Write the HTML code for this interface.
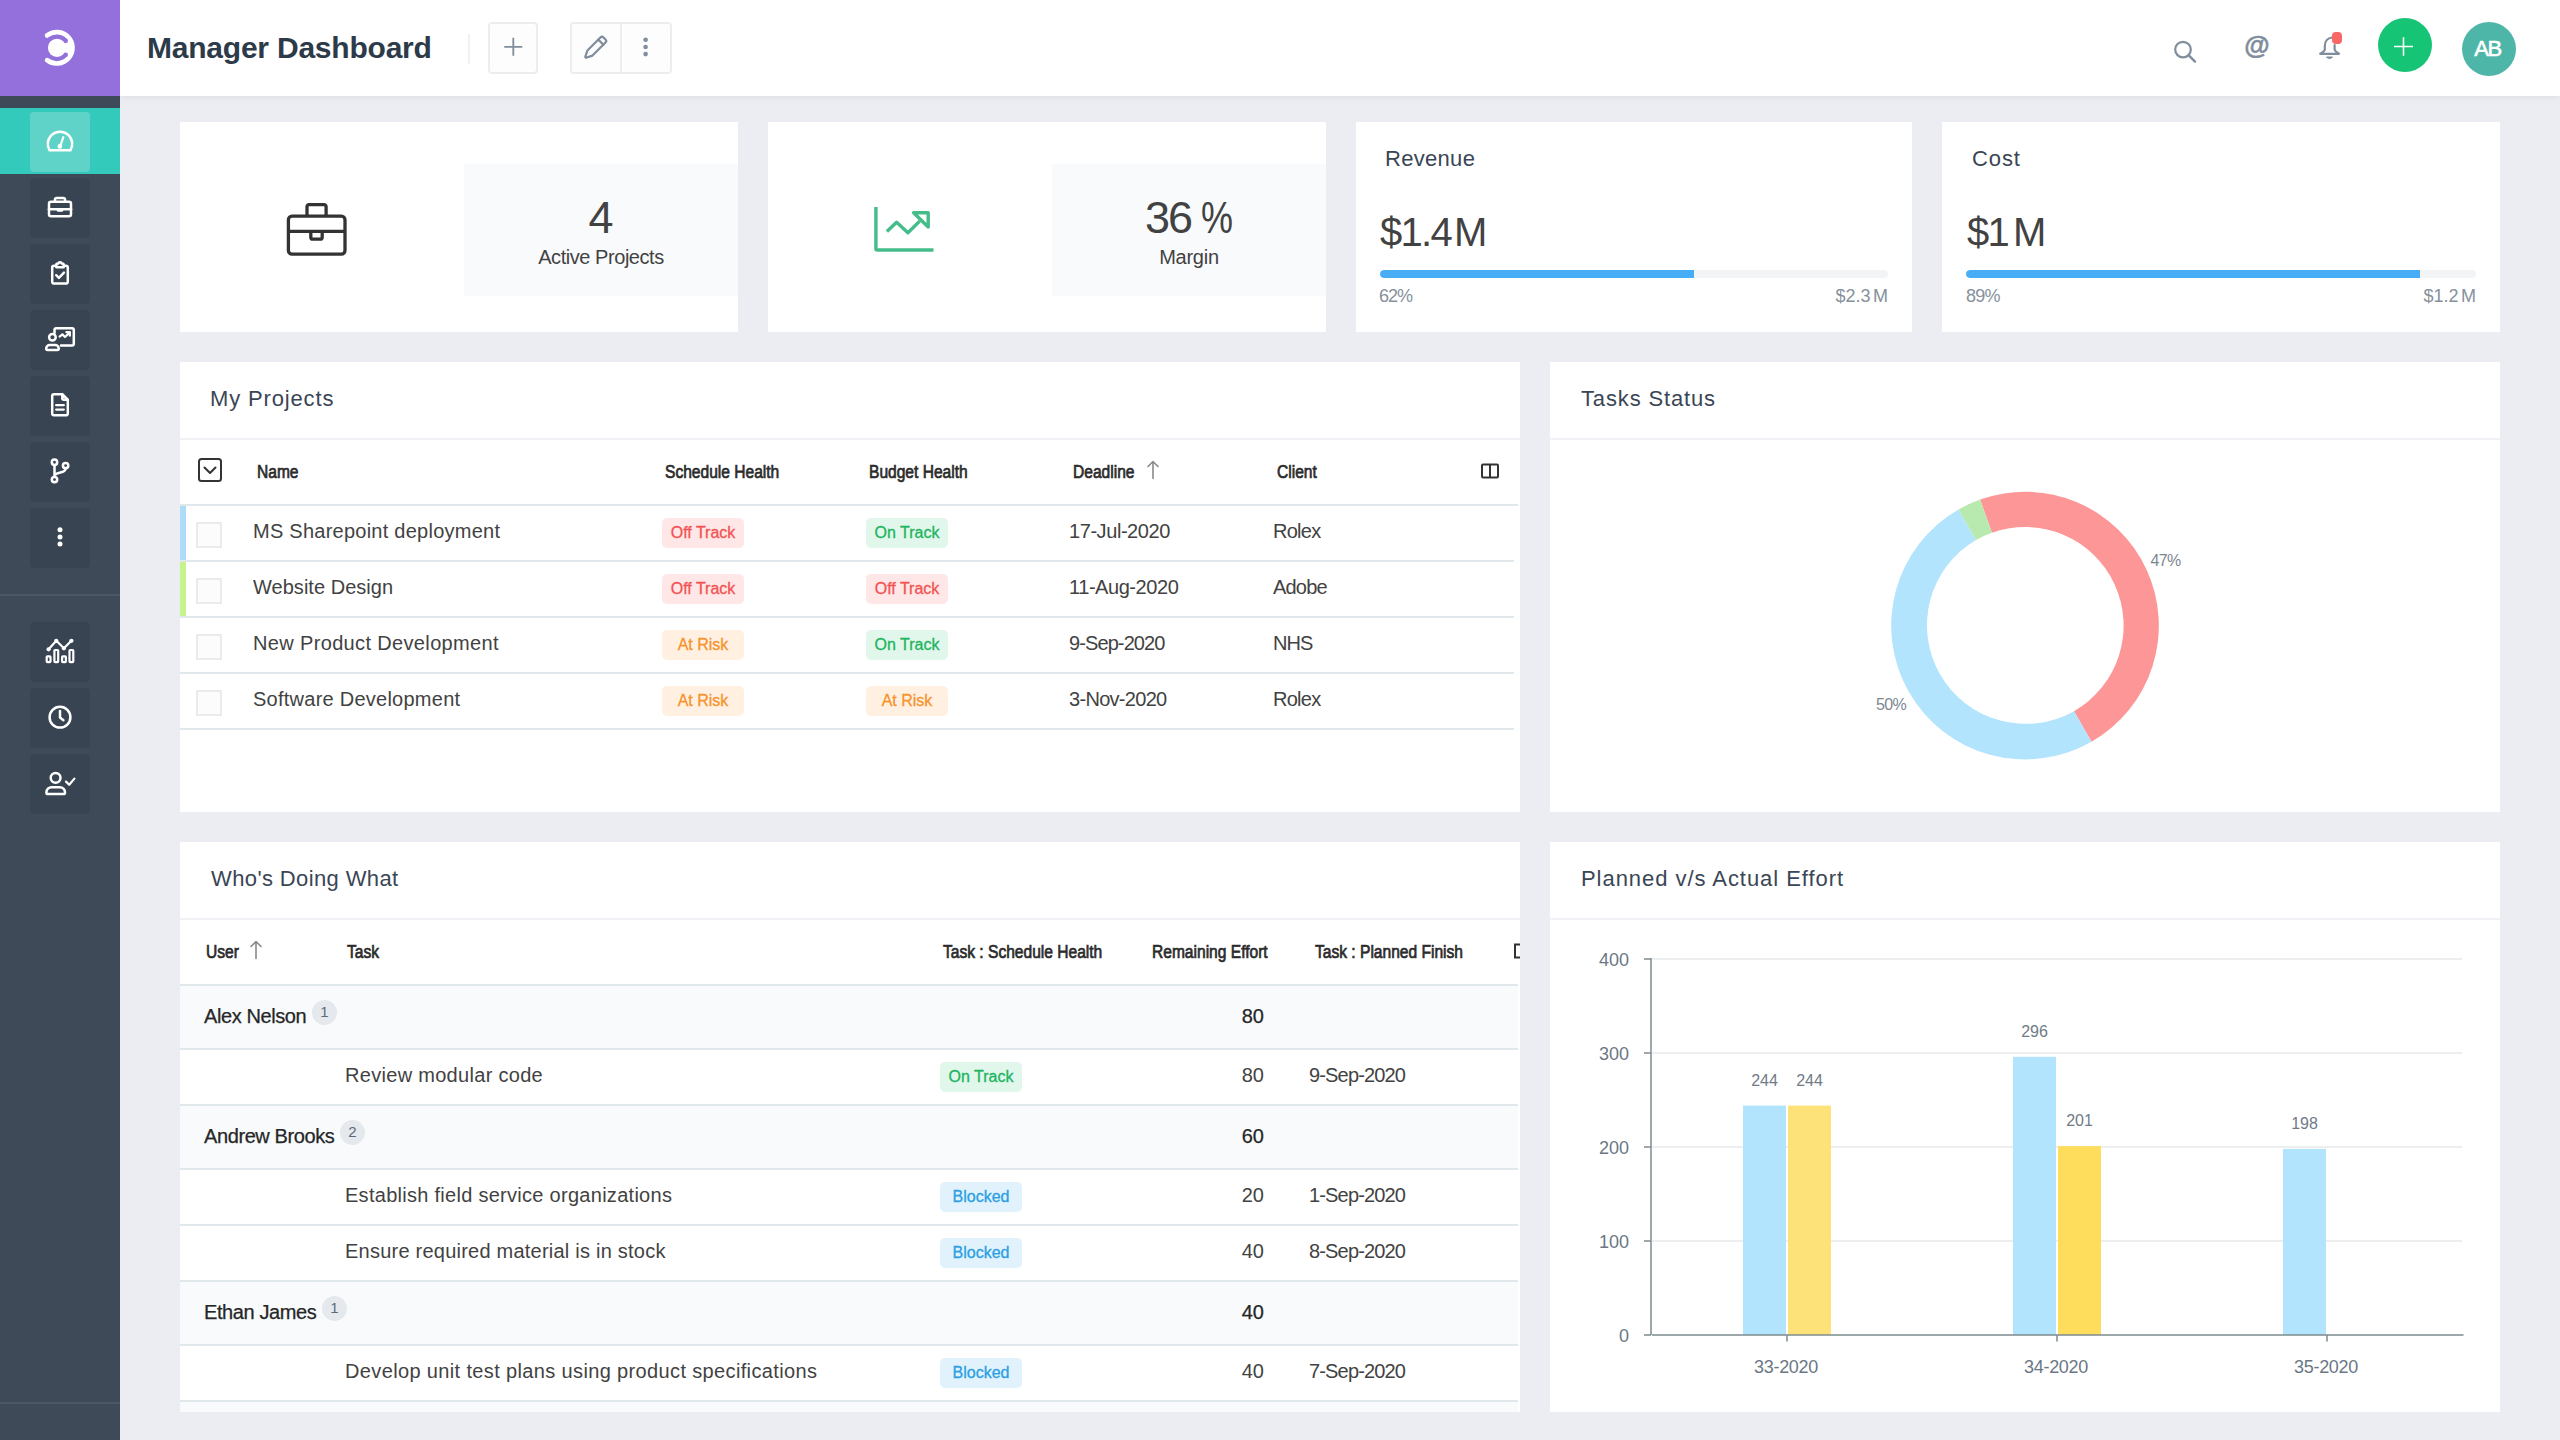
<!DOCTYPE html><html lang="en"><head><meta charset="utf-8"><title>Manager Dashboard</title><style>
*{box-sizing:border-box;margin:0;padding:0}
html,body{width:2560px;height:1440px;overflow:hidden}
body{position:relative;background:#ebedf2;font-family:"Liberation Sans",sans-serif;color:#333;}
.abs{position:absolute}
#side{position:absolute;z-index:5;left:0;top:0;width:120px;height:1440px;background:#3f4a59}
#logo{position:absolute;left:0;top:0;width:120px;height:96px;background:#9370dc}
#act{position:absolute;left:0;top:108px;width:120px;height:66px;background:#33c9bb}
.nb{position:absolute;left:30px;width:60px;height:60px;border-radius:4px;background:#394453}
.nb.on{background:#60d3c8}
.sdiv{position:absolute;left:0;width:120px;height:2px;background:#4b5766}
#hdr{position:absolute;left:120px;top:0;width:2440px;height:96px;background:#fff;box-shadow:0 1px 7px rgba(60,70,90,.09)}
#ttl{position:absolute;left:147px;top:26px;height:44px;line-height:44px;font-size:30px;font-weight:bold;color:#2d3a49;white-space:nowrap;letter-spacing:-.22px}
.hb{position:absolute;top:22px;height:52px;border:2px solid #ebedef;border-radius:4px;background:#fdfdfd}
.card{position:absolute;top:122px;height:210px;background:#fff}
.cin{position:absolute;top:42px;right:0;width:274px;height:132px;background:#f9fafc;text-align:center}
.big{position:absolute;left:0;width:100%;top:28px;font-size:45px;line-height:52px;color:#424242;white-space:nowrap}
.big b{font-weight:normal;letter-spacing:-2px}
.pc{display:inline-block;font-style:normal;transform:scaleX(.8);transform-origin:0 50%;margin-left:10px;margin-right:-8px}
.sub{position:absolute;left:0;width:100%;top:80px;font-size:20px;line-height:26px;color:#424242;white-space:nowrap;letter-spacing:-.45px}
.ct{position:absolute;top:22px;font-size:22px;line-height:28px;color:#3a4655;letter-spacing:.9px;white-space:nowrap}
.cv{position:absolute;top:86px;font-size:40px;line-height:48px;color:#424242;white-space:nowrap;letter-spacing:-1.7px}
.pb{position:absolute;top:148px;height:8px;border-radius:4px;background:#f3f4f5;overflow:hidden}
.pb i{position:absolute;left:0;top:0;height:8px;background:#47adf5;border-radius:4px 0 0 4px}
.pl{position:absolute;top:163px;font-size:18px;line-height:22px;color:#86919c;white-space:nowrap}
.panel{position:absolute;background:#fff;overflow:hidden}
.pt{position:absolute;left:30px;top:22px;font-size:22px;line-height:30px;color:#3a4655;letter-spacing:.85px;white-space:nowrap}
.tsep{position:absolute;left:0;right:0;top:76px;height:2px;background:#f0f2f5}
.hl{position:absolute;height:2px;background:#e1e8eb}
.th{position:absolute;font-size:18px;line-height:24px;font-weight:normal;-webkit-text-stroke:.7px;color:#2b2b2b;white-space:nowrap;transform-origin:0 50%;transform:scaleX(.865)}
.td{position:absolute;font-size:20px;line-height:26px;color:#424242;white-space:nowrap}
.tg{position:absolute;font-size:20px;line-height:26px;color:#262626;white-space:nowrap;-webkit-text-stroke:.25px}
.bd{position:absolute;width:82px;height:30px;border-radius:5px;font-size:16px;line-height:30px;text-align:center;white-space:nowrap;-webkit-text-stroke:.3px}
.on_{background:#e2f7ec;color:#1db45e}
.off{background:#ffe7e7;color:#f25252}
.risk{background:#fff0e2;color:#f6932b}
.blk{background:#e1f2fc;color:#2b9fe3}
.cb{position:absolute;left:16px;width:26px;height:26px;border:2px solid #ebebeb;background:#fcfcfc}
.grow{position:absolute;left:0;width:1338px;background:#f8fafc}
.cnt{position:absolute;width:25px;height:25px;border-radius:13px;background:#e5e8ec;color:#5b6b7b;font-size:15px;line-height:24px;text-align:center}
svg{position:absolute;overflow:visible}
svg text{font-family:"Liberation Sans",sans-serif}
</style></head><body>
<div id="side">
<div id="logo"><svg width="120" height="96" viewBox="0 0 120 96" style="left:0;top:0">
<path d="M47.13 35.43A15.7 15.7 0 1 1 47.13 60.17" fill="none" stroke="#fff" stroke-width="4.7" stroke-linecap="round"/>
<circle cx="57" cy="47.8" r="9.1" fill="#fff"/>
<path d="M65.70 40.84A11.3 11.3 0 0 1 65.70 54.76" fill="none" stroke="#fff" stroke-width="6.6"/>
<circle cx="65.70" cy="40.84" r="2.3" fill="#9370dc"/><circle cx="65.70" cy="54.76" r="2.3" fill="#9370dc"/>
</svg></div>
<div id="act"></div>
<div class="nb on" style="top:112px"></div>
<div class="nb" style="top:178px"></div>
<div class="nb" style="top:244px"></div>
<div class="nb" style="top:310px"></div>
<div class="nb" style="top:376px"></div>
<div class="nb" style="top:442px"></div>
<div class="nb" style="top:508px"></div>
<div class="nb" style="top:622px"></div>
<div class="nb" style="top:688px"></div>
<div class="nb" style="top:754px"></div>
<div class="sdiv" style="top:594px"></div><div class="sdiv" style="top:1402px"></div>
<svg width="120" height="1440" viewBox="0 0 120 1440" style="left:0;top:0" fill="none" stroke="#fff" stroke-width="2.5" stroke-linecap="round" stroke-linejoin="round">
<path d="M70.5 150.25A12.25 12.25 0 1 0 49.5 150.25Z"/>
<path d="M63.3 137.2L60.4 145.6" stroke-width="2.2"/><circle cx="59.8" cy="146.4" r="2.3" fill="#fff" stroke="none"/>
<rect x="49" y="201.7" width="22" height="14.6" rx="2"/><path d="M55 201.5V199.600A1.600 1.600 0 0 1 56.600 198H63.400A1.600 1.600 0 0 1 65 199.600V201.500"/><path d="M49 209.2H71"/><path d="M57.8 209.6V210.6H62.2V209.6" stroke-width="2.2"/>
<path d="M56 265.7H54A1.8 1.8 0 0 0 52.2 267.5V281.8A1.8 1.8 0 0 0 54 283.6H66A1.8 1.8 0 0 0 67.8 281.8V267.5A1.8 1.8 0 0 0 66 265.7H64"/><path d="M56.3 267.2V264.8A1.3 1.3 0 0 1 57.6 263.5H58.2A1.9 1.9 0 0 1 61.8 263.5H62.4A1.3 1.3 0 0 1 63.7 264.8V267.2Z"/><path d="M56.2 275.2L58.9 277.9L64 272.6" stroke-width="2.4"/>
<path d="M54.5 333V330A1.8 1.8 0 0 1 56.3 328.2H72A1.8 1.8 0 0 1 73.8 330V343.8A1.8 1.8 0 0 1 72 345.6H61"/><circle cx="52.4" cy="337.3" r="3.3"/><path d="M47.6 350H57.4A1.4 1.4 0 0 0 58.8 348.6A3.6 3.6 0 0 0 55.2 345H49.8A3.6 3.6 0 0 0 46.2 348.6A1.4 1.4 0 0 0 47.6 350Z"/><path d="M59.6 336.6L62.4 334.4L65 337L69.6 332.6M66.4 332.2H69.9V335.7" stroke-width="2.2"/>
<path d="M62.3 394.2H54A1.8 1.8 0 0 0 52.2 396V413.5A1.8 1.8 0 0 0 54 415.3H66A1.8 1.8 0 0 0 67.8 413.5V399.7L62.3 394.2V398.2A1.5 1.5 0 0 0 63.8 399.7H67.8"/><path d="M56.2 405.2H63.8M56.2 409.6H63.8" stroke-width="2.3"/>
<circle cx="54.5" cy="462.3" r="2.7"/><circle cx="54.5" cy="479.6" r="2.7"/><circle cx="65.6" cy="465.6" r="2.7"/><path d="M54.5 465.2V476.7M65.6 468.5C65.6 473.5 58 471.5 54.8 474.8"/>
<g fill="#fff" stroke="none"><circle cx="60" cy="529.8" r="2.5"/><circle cx="60" cy="537" r="2.5"/><circle cx="60" cy="544.1" r="2.5"/></g>
<g stroke-width="2.2"><rect x="46.7" y="656.3" width="3.8" height="5.8" rx=".8"/><rect x="54.4" y="650" width="3.8" height="12.1" rx=".8"/><rect x="62.1" y="656.3" width="3.8" height="5.8" rx=".8"/><rect x="69.5" y="650" width="3.8" height="12.1" rx=".8"/><path d="M48.6 649.3L56.3 640.8L63.9 648.3L71.4 640.8"/></g><g fill="#fff" stroke="none"><circle cx="48.6" cy="649.3" r="2.1"/><circle cx="56.3" cy="640.8" r="2.1"/><circle cx="63.9" cy="648.3" r="2.1"/><circle cx="71.4" cy="640.8" r="2.1"/></g>
<circle cx="60" cy="717.2" r="10.4"/><path d="M60 711V717.6L63.4 720.2"/>
<circle cx="55.6" cy="777.8" r="4.9"/><path d="M48 794H63.400A1.6 1.6 0 0 0 65 792.4A5.2 5.2 0 0 0 59.800 787.2H51.600A5.2 5.2 0 0 0 46.400 792.400A1.600 1.600 0 0 0 48.000 794Z"/><path d="M66 781.6L69.2 784.8L74.4 778.6" stroke-width="2.2"/>
</svg>
</div>
<div id="hdr"></div>
<div id="ttl">Manager Dashboard</div>
<div class="abs" style="left:468px;top:34px;width:2px;height:30px;background:#f0f1f3"></div>
<div class="hb" style="left:488px;width:50px"></div>
<div class="hb" style="left:570px;width:102px"></div><div class="abs" style="left:620px;top:24px;width:2px;height:48px;background:#eceef0"></div>
<svg width="2560" height="96" viewBox="0 0 2560 96" style="left:0;top:0" fill="none" stroke="#7f8d9c" stroke-width="2" stroke-linecap="round" stroke-linejoin="round">
<path d="M504.3 46.8H522.3M513.3 37.8V55.8" stroke-width="1.8" stroke-linecap="butt"/>
<g transform="translate(594.9 48.1) rotate(45)" stroke-width="2.2"><path d="M-3.6 7V-11.4A2.2 2.2 0 0 1 -1.4 -13.6H1.4A2.2 2.2 0 0 1 3.6 -11.4V7L.5 13.2H-.5Z"/><path d="M-3.6 -8.4H3.6"/></g>
<g fill="#7f8d9c" stroke="none"><circle cx="645.6" cy="39.7" r="2.3"/><circle cx="645.6" cy="47" r="2.3"/><circle cx="645.6" cy="54.1" r="2.3"/></g>
<circle cx="2183" cy="49.6" r="7.8" stroke-width="2.2"/><path d="M2188.8 55.4L2195 61.6" stroke-width="2.4"/>
<path d="M2332 37.500C2327.5 38 2324.800 41.500 2324.800 46V49.500C2324.800 51 2323 52.200 2320.200 53.800H2339C2336.500 52.200 2334.600 51 2334.600 49.500V45" stroke-width="2.2"/><path d="M2327 57.300H2332L2329.500 58.200Z" stroke-width="1.6" fill="#7f8d9c"/>
</svg>
<div class="abs" style="left:2241px;top:27px;width:32px;height:36px;line-height:36px;font-size:26px;font-weight:bold;color:#7f8d9c;text-align:center;-webkit-text-stroke:.5px">@</div>
<div class="abs" style="left:2332px;top:32px;width:10px;height:12px;border-radius:4px;background:#f96767"></div>
<div class="abs" style="left:2378px;top:18px;width:54px;height:54px;border-radius:27px;background:#15c475"></div>
<svg width="54" height="54" viewBox="2378 18 54 54" style="left:2378px;top:18px"><path d="M2394 46.500H2413M2403.500 37.200V55.800" stroke="#fff" stroke-width="1.6" fill="none"/></svg>
<div class="abs" style="left:2462px;top:22px;width:54px;height:54px;border-radius:27px;background:#4db6a8;color:#fff;font-size:22px;line-height:54px;text-align:center;letter-spacing:-1.3px;text-indent:-3px;-webkit-text-stroke:.6px">AB</div>
<div class="card" style="left:180px;width:558px"><div class="cin"><div class="big">4</div><div class="sub">Active Projects</div></div>
<svg width="66" height="56" viewBox="0 0 66 56" style="left:104px;top:80px" fill="none" stroke="#333" stroke-width="3.3" stroke-linejoin="round"><rect x="4.4" y="14.1" width="56.6" height="38.1" rx="3.6"/><path d="M23 14.1V4.7A2 2 0 0 1 25 2.7H40.100A2 2 0 0 1 42.100 4.7V14.100"/><path d="M4.4 29.4H61"/><path d="M26.8 29.4V35.2A2 2 0 0 0 28.8 37.2H36.2A2 2 0 0 0 38.2 35.2V29.4"/></svg></div>
<div class="card" style="left:768px;width:558px"><div class="cin"><div class="big"><b>36</b><i class="pc">%</i></div><div class="sub" style="letter-spacing:-.25px">Margin</div></div>
<svg width="66" height="56" viewBox="0 0 66 56" style="left:104px;top:80px" fill="none" stroke="#45bd8a" stroke-width="3.4" stroke-linejoin="round"><path d="M3.9 5V46.500A1.5 1.5 0 0 0 5.4 48H61.500"/><path d="M14.9 29.4L24.6 20.2L35.9 30.8L47.7 19.1"/><path d="M41.6 10.8H56.2V25Z"/></svg></div>
<div class="card" style="left:1356px;width:556px"><div class="ct" style="left:29px;letter-spacing:.3px;top:23px">Revenue</div><div class="cv" style="left:24px">$1.4<span style="font-size:17px"> </span>M</div><div class="pb" style="left:24px;width:508px"><i style="width:314px"></i></div><div class="pl" style="left:23px;letter-spacing:-1px">62%</div><div class="pl" style="right:24px">$2.3<span style="font-size:9px"> </span>M</div></div>
<div class="card" style="left:1942px;width:558px"><div class="ct" style="left:30px;top:23px">Cost</div><div class="cv" style="left:25px">$1<span style="font-size:24px"> </span>M</div><div class="pb" style="left:24px;width:510px"><i style="width:454px"></i></div><div class="pl" style="left:24px;letter-spacing:-.8px">89%</div><div class="pl" style="right:24px">$1.2<span style="font-size:9px"> </span>M</div></div>
<div class="panel" style="left:180px;top:362px;width:1340px;height:450px"><div class="pt">My Projects</div><div class="tsep"></div>
<div class="hl" style="left:0;top:142px;width:1338px"></div>
<svg width="30" height="30" viewBox="0 0 30 30" style="left:15px;top:93px" fill="none" stroke="#333" stroke-width="2"><rect x="4" y="4" width="22" height="22" rx="2.5"/><path d="M9.5 12.500L15 18L20.500 12.500" stroke-linecap="round" stroke-linejoin="round"/></svg>
<div class="th" style="left:77px;top:98px">Name</div>
<div class="th" style="left:485px;top:98px">Schedule Health</div>
<div class="th" style="left:689px;top:98px">Budget Health</div>
<div class="th" style="left:893px;top:98px">Deadline</div>
<div class="th" style="left:1097px;top:98px">Client</div>
<svg width="14" height="22" viewBox="0 0 14 22" style="left:966px;top:97px" fill="none" stroke="#8a8a8a" stroke-width="1.6" stroke-linecap="round" stroke-linejoin="round"><path d="M7 2.500V19.500M2 7.500L7 2.500L12 7.500"/></svg>
<svg width="22" height="20" viewBox="0 0 22 20" style="left:1299px;top:99px" fill="none" stroke="#333" stroke-width="2" stroke-linejoin="round"><rect x="3" y="3.500" width="16" height="13" rx="1"/><path d="M11 3.500V16.500"/></svg>
<div class="abs" style="left:0;top:144px;width:6px;height:54px;background:#addcf6"></div>
<div class="cb" style="top:160px"></div>
<div class="td" style="left:73px;top:156px;letter-spacing:0.25px">MS Sharepoint deployment</div>
<div class="bd off" style="left:482px;top:156px">Off Track</div>
<div class="bd on_" style="left:686px;top:156px">On Track</div>
<div class="td" style="left:889px;top:156px;letter-spacing:-0.43px">17-Jul-2020</div>
<div class="td" style="left:1093px;top:156px;letter-spacing:-0.75px">Rolex</div>
<div class="hl" style="left:0;top:198px;width:1334px"></div>
<div class="abs" style="left:0;top:200px;width:6px;height:54px;background:#c5f38c"></div>
<div class="cb" style="top:216px"></div>
<div class="td" style="left:73px;top:212px;letter-spacing:0.03px">Website Design</div>
<div class="bd off" style="left:482px;top:212px">Off Track</div>
<div class="bd off" style="left:686px;top:212px">Off Track</div>
<div class="td" style="left:889px;top:212px;letter-spacing:-0.44px">11-Aug-2020</div>
<div class="td" style="left:1093px;top:212px;letter-spacing:-0.8px">Adobe</div>
<div class="hl" style="left:0;top:254px;width:1334px"></div>
<div class="cb" style="top:272px"></div>
<div class="td" style="left:73px;top:268px;letter-spacing:0.35px">New Product Development</div>
<div class="bd risk" style="left:482px;top:268px">At Risk</div>
<div class="bd on_" style="left:686px;top:268px">On Track</div>
<div class="td" style="left:889px;top:268px;letter-spacing:-0.9px">9-Sep-2020</div>
<div class="td" style="left:1093px;top:268px;letter-spacing:-0.9px">NHS</div>
<div class="hl" style="left:0;top:310px;width:1334px"></div>
<div class="cb" style="top:328px"></div>
<div class="td" style="left:73px;top:324px;letter-spacing:0.25px">Software Development</div>
<div class="bd risk" style="left:482px;top:324px">At Risk</div>
<div class="bd risk" style="left:686px;top:324px">At Risk</div>
<div class="td" style="left:889px;top:324px;letter-spacing:-0.7px">3-Nov-2020</div>
<div class="td" style="left:1093px;top:324px;letter-spacing:-0.75px">Rolex</div>
<div class="hl" style="left:0;top:366px;width:1334px"></div>
</div>
<div class="panel" style="left:1550px;top:362px;width:950px;height:450px"><div class="pt" style="left:31px">Tasks Status</div><div class="tsep"></div>
<svg width="950" height="450" viewBox="1550 362 950 450" style="left:0;top:0">
<path d="M1980.12 499.55A133.8 133.8 0 0 1 2091.50 741.71L2074.00 711.16A98.6 98.6 0 0 0 1991.92 532.71Z" fill="#fd9696"/>
<path d="M2091.50 741.71A133.8 133.8 0 0 1 1958.50 509.49L1976.00 540.04A98.6 98.6 0 0 0 2074.00 711.16Z" fill="#b3e4fd"/>
<path d="M1958.50 509.49A133.8 133.8 0 0 1 1980.12 499.55L1991.92 532.71A98.6 98.6 0 0 0 1976.00 540.04Z" fill="#b8eab0"/>
<text x="2150.500" y="566" font-size="16" fill="#7d8791" letter-spacing="-.7">47%</text><text x="1876" y="709.500" font-size="16" fill="#7d8791" letter-spacing="-.7">50%</text>
</svg></div>
<div class="panel" style="left:180px;top:842px;width:1340px;height:570px"><div class="pt" style="letter-spacing:.38px;left:31px">Who's Doing What</div><div class="tsep"></div>
<div class="hl" style="left:0;top:142px;width:1338px"></div>
<div class="th" style="left:26px;top:98px">User</div>
<div class="th" style="left:167px;top:98px">Task</div>
<div class="th" style="left:763px;top:98px">Task : Schedule Health</div>
<div class="th" style="left:972px;top:98px">Remaining Effort</div>
<div class="th" style="left:1135px;top:98px">Task : Planned Finish</div>
<svg width="14" height="22" viewBox="0 0 14 22" style="left:69px;top:97px" fill="none" stroke="#8a8a8a" stroke-width="1.6" stroke-linecap="round" stroke-linejoin="round"><path d="M7 2.500V19.500M2 7.500L7 2.500L12 7.500"/></svg>
<svg width="8" height="20" viewBox="0 0 8 20" style="left:1332px;top:99px" fill="none" stroke="#333" stroke-width="2"><path d="M8 3.500H3V16.500H8"/></svg>
<div class="grow" style="top:144px;height:62px"></div>
<div class="tg" style="left:24px;top:161px;letter-spacing:-.4px">Alex Nelson</div>
<div class="cnt" style="left:132px;top:158px">1</div>
<div class="tg" style="right:256px;top:161px">80</div>
<div class="hl" style="left:0;top:206px;width:1338px"></div>
<div class="td" style="left:165px;top:220px;letter-spacing:0.3px">Review modular code</div>
<div class="bd on_" style="left:760px;top:220px">On Track</div>
<div class="td" style="right:256px;top:220px">80</div>
<div class="td" style="left:1129px;top:220px;letter-spacing:-.84px">9-Sep-2020</div>
<div class="hl" style="left:0;top:262px;width:1338px"></div>
<div class="grow" style="top:264px;height:62px"></div>
<div class="tg" style="left:24px;top:281px;letter-spacing:-.4px">Andrew Brooks</div>
<div class="cnt" style="left:160px;top:278px">2</div>
<div class="tg" style="right:256px;top:281px">60</div>
<div class="hl" style="left:0;top:326px;width:1338px"></div>
<div class="td" style="left:165px;top:340px;letter-spacing:0.28px">Establish field service organizations</div>
<div class="bd blk" style="left:760px;top:340px">Blocked</div>
<div class="td" style="right:256px;top:340px">20</div>
<div class="td" style="left:1129px;top:340px;letter-spacing:-.84px">1-Sep-2020</div>
<div class="hl" style="left:0;top:382px;width:1338px"></div>
<div class="td" style="left:165px;top:396px;letter-spacing:0.23px">Ensure required material is in stock</div>
<div class="bd blk" style="left:760px;top:396px">Blocked</div>
<div class="td" style="right:256px;top:396px">40</div>
<div class="td" style="left:1129px;top:396px;letter-spacing:-.84px">8-Sep-2020</div>
<div class="hl" style="left:0;top:438px;width:1338px"></div>
<div class="grow" style="top:440px;height:62px"></div>
<div class="tg" style="left:24px;top:457px;letter-spacing:-.4px">Ethan James</div>
<div class="cnt" style="left:142px;top:454px">1</div>
<div class="tg" style="right:256px;top:457px">40</div>
<div class="hl" style="left:0;top:502px;width:1338px"></div>
<div class="td" style="left:165px;top:516px;letter-spacing:0.36px">Develop unit test plans using product specifications</div>
<div class="bd blk" style="left:760px;top:516px">Blocked</div>
<div class="td" style="right:256px;top:516px">40</div>
<div class="td" style="left:1129px;top:516px;letter-spacing:-.84px">7-Sep-2020</div>
<div class="hl" style="left:0;top:558px;width:1338px"></div>
<div class="grow" style="top:560px;height:20px"></div>
</div>
<div class="panel" style="left:1550px;top:842px;width:950px;height:570px"><div class="pt" style="left:31px;letter-spacing:.95px">Planned v/s Actual Effort</div><div class="tsep"></div>
<svg width="950" height="570" viewBox="1550 842 950 570" style="left:0;top:0">
<path d="M1652 1241.0H2462" stroke="#e6e8ea" stroke-width="1.5"/>
<path d="M1652 1147.0H2462" stroke="#e6e8ea" stroke-width="1.5"/>
<path d="M1652 1053.0H2462" stroke="#e6e8ea" stroke-width="1.5"/>
<path d="M1652 959.0H2462" stroke="#e6e8ea" stroke-width="1.5"/>
<rect x="1743" y="1105.6" width="43" height="229.4" fill="#b3e4fd"/>
<text x="1764.5" y="1085.6" font-size="16" fill="#707b87" text-anchor="middle">244</text>
<rect x="1788" y="1105.6" width="43" height="229.4" fill="#fde27a"/>
<text x="1809.5" y="1085.6" font-size="16" fill="#707b87" text-anchor="middle">244</text>
<rect x="2013" y="1056.8" width="43" height="278.2" fill="#b3e4fd"/>
<text x="2034.5" y="1036.8" font-size="16" fill="#707b87" text-anchor="middle">296</text>
<rect x="2058" y="1146.1" width="43" height="188.9" fill="#fddd5b"/>
<text x="2079.5" y="1126.1" font-size="16" fill="#707b87" text-anchor="middle">201</text>
<rect x="2283" y="1148.9" width="43" height="186.1" fill="#b3e4fd"/>
<text x="2304.5" y="1128.9" font-size="16" fill="#707b87" text-anchor="middle">198</text>
<path d="M1651 958V1335" stroke="#7c8b8f" stroke-width="1.5"/><path d="M1652 1335H2463.500" stroke="#7c8b8f" stroke-width="1.5"/>
<path d="M1644 1335.0H1651" stroke="#7c8b8f" stroke-width="1.5"/>
<text x="1629" y="1341.5" font-size="18" fill="#6b7785" text-anchor="end">0</text>
<path d="M1644 1241.0H1651" stroke="#7c8b8f" stroke-width="1.5"/>
<text x="1629" y="1247.5" font-size="18" fill="#6b7785" text-anchor="end">100</text>
<path d="M1644 1147.0H1651" stroke="#7c8b8f" stroke-width="1.5"/>
<text x="1629" y="1153.5" font-size="18" fill="#6b7785" text-anchor="end">200</text>
<path d="M1644 1053.0H1651" stroke="#7c8b8f" stroke-width="1.5"/>
<text x="1629" y="1059.5" font-size="18" fill="#6b7785" text-anchor="end">300</text>
<path d="M1644 959.0H1651" stroke="#7c8b8f" stroke-width="1.5"/>
<text x="1629" y="965.5" font-size="18" fill="#6b7785" text-anchor="end">400</text>
<path d="M1787 1335V1341.500" stroke="#7c8b8f" stroke-width="1.5"/>
<text x="1786" y="1372.500" font-size="18" fill="#6b7785" text-anchor="middle" letter-spacing="-.3">33-2020</text>
<path d="M2057 1335V1341.500" stroke="#7c8b8f" stroke-width="1.5"/>
<text x="2056" y="1372.500" font-size="18" fill="#6b7785" text-anchor="middle" letter-spacing="-.3">34-2020</text>
<path d="M2327 1335V1341.500" stroke="#7c8b8f" stroke-width="1.5"/>
<text x="2326" y="1372.500" font-size="18" fill="#6b7785" text-anchor="middle" letter-spacing="-.3">35-2020</text>
</svg></div>
</body></html>
